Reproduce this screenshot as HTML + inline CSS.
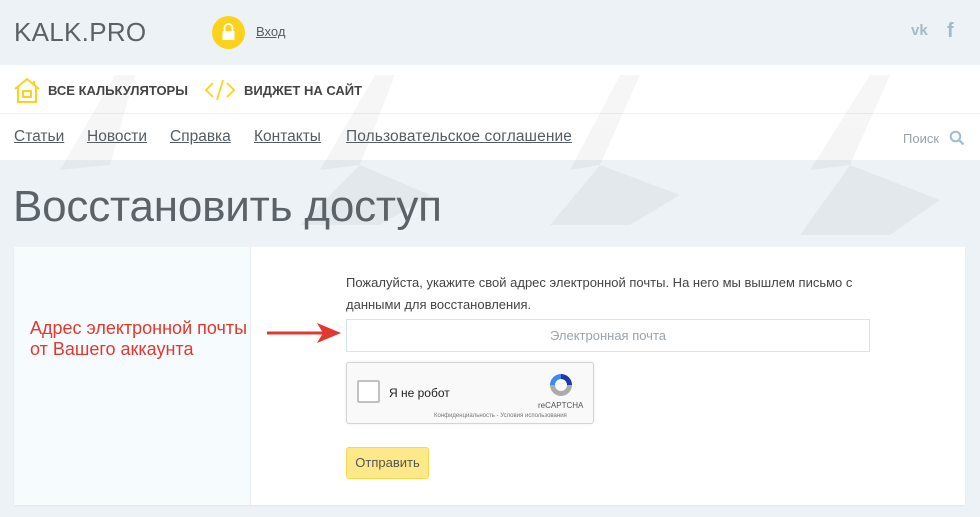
<!DOCTYPE html>
<html><head><meta charset="utf-8"><style>
*{margin:0;padding:0;box-sizing:border-box}
body{width:980px;height:517px;overflow:hidden;background:#edf2f6;font-family:"Liberation Sans",sans-serif;position:relative}
.abs{position:absolute}
a{color:#555d63;text-decoration:underline}
</style></head><body>
<div class="abs" style="left:0;top:65px;width:980px;height:95px;background:#fff"></div>
<div class="abs" style="left:0;top:113px;width:980px;height:1px;background:#eef1f3"></div>
<svg class="abs" style="left:0;top:0" width="980" height="517">
<g fill="#000" opacity="0.035">
<polygon points="115,75 135,75 110,165 60,170"/>
<polygon points="375,75 395,75 360,165 320,170"/>
<polygon points="620,75 640,75 600,165 570,170"/>
<polygon points="870,75 890,75 850,165 810,170"/>
<polygon points="360,165 430,195 380,225 300,225"/>
<polygon points="600,165 680,195 630,225 550,225"/>
<polygon points="850,165 940,200 890,235 800,235"/>
</g>
</svg>
<div class="abs" style="left:14px;top:17px;font-size:26px;color:#5a6268;letter-spacing:0.3px">KALK.PRO</div>
<div class="abs" style="left:212px;top:16px;width:33px;height:33px;border-radius:50%;background:#fcd21c"></div>
<svg class="abs" style="left:220px;top:22px" width="17" height="20"><path d="M4.5 9V6a4 4 0 0 1 8 0v3" stroke="#fff" stroke-width="1.8" fill="none"/><rect x="2.5" y="9" width="12" height="9" fill="#fff"/></svg>
<a class="abs" style="left:256px;top:24px;font-size:13px">Вход</a>
<div class="abs" style="left:911px;top:22px;font-size:15px;font-weight:bold;color:#9fbccb">vk</div>
<div class="abs" style="left:947px;top:20px;font-size:20px;font-weight:bold;color:#9fbccb">f</div>
<svg class="abs" style="left:13px;top:77px" width="28" height="27"><path d="M2 12 L14 2 L26 12 M5 10 V25 H23 V10 M10 14 H18 V20 H10Z M21 4 V8" stroke="#fcd21c" stroke-width="2" fill="none"/></svg>
<div class="abs" style="left:48px;top:83px;font-size:13px;font-weight:bold;color:#444">ВСЕ КАЛЬКУЛЯТОРЫ</div>
<svg class="abs" style="left:204px;top:78px" width="32" height="24"><path d="M9 5 L2 12 L9 19 M23 5 L30 12 L23 19 M19 2 L13 22" stroke="#fcd21c" stroke-width="1.8" fill="none"/></svg>
<div class="abs" style="left:244px;top:83px;font-size:13px;font-weight:bold;color:#444">ВИДЖЕТ НА САЙТ</div>
<div class="abs" style="top:128px;font-size:15.5px;color:#555d63;left:0;width:980px">
<a class="abs" style="left:14px">Статьи</a><a class="abs" style="left:87px">Новости</a><a class="abs" style="left:170px">Справка</a><a class="abs" style="left:254px">Контакты</a><a class="abs" style="left:346px;letter-spacing:0.1px">Пользовательское соглашение</a></div>
<div class="abs" style="left:903px;top:131px;font-size:13px;color:#9aa4aa">Поиск</div>
<svg class="abs" style="left:949px;top:130px" width="16" height="16"><circle cx="6.5" cy="6.5" r="4.8" stroke="#9fbccb" stroke-width="2" fill="none"/><path d="M10 10 L14.5 14.5" stroke="#9fbccb" stroke-width="2.2"/></svg>
<div class="abs" style="left:13px;top:182px;font-size:44px;color:#5b6369;letter-spacing:-0.2px">Восстановить доступ</div>
<div class="abs" style="left:14px;top:247px;width:951px;height:258px;background:#fff;box-shadow:0 1px 2px rgba(0,0,0,0.05)"></div>
<div class="abs" style="left:14px;top:247px;width:237px;height:258px;background:#f6fbfd;border-right:1px solid #e6eef2"></div>
<div class="abs" style="left:30px;top:318px;font-size:18px;line-height:21px;color:#e2382f">Адрес электронной почты<br>от Вашего аккаунта</div>
<svg class="abs" style="left:265px;top:321px" width="78" height="24"><path d="M2 12 H60" stroke="#e2382f" stroke-width="3"/><path d="M52 2 L76 12 L52 22 L58 12Z" fill="#e2382f"/></svg>
<div class="abs" style="left:346px;top:272px;font-size:13px;line-height:22px;color:#444;width:540px">Пожалуйста, укажите свой адрес электронной почты. На него мы вышлем письмо с данными для восстановления.</div>
<div class="abs" style="left:346px;top:319px;width:524px;height:33px;border:1px solid #d6e5ee;text-align:center;line-height:31px;font-size:13px;color:#9aa4aa">Электронная почта</div>
<div class="abs" style="left:346px;top:362px;width:248px;height:62px;border:1px solid #d3d3d3;border-radius:3px;background:#f9f9f9;box-shadow:0 0 3px rgba(0,0,0,0.08)"></div>
<div class="abs" style="left:357px;top:380px;width:23px;height:23px;border:2px solid #c1c1c1;border-radius:2px;background:#fff"></div>
<div class="abs" style="left:389px;top:386px;font-size:12px;color:#222">Я не робот</div>
<svg class="abs" style="left:547px;top:371px" width="28" height="28"><path d="M14 3 A11 11 0 0 1 25 14 L20 14 A6 6 0 0 0 14 8Z" fill="#1c3aa9"/><path d="M3 14 A11 11 0 0 1 14 3 L14 8 A6 6 0 0 0 8 14Z" fill="#4285f4"/><path d="M25 14 A11 11 0 0 1 3 14 L8 14 A6 6 0 0 0 20 14Z" fill="#ababab"/></svg>
<div class="abs" style="left:538px;top:401px;font-size:8px;color:#555">reCAPTCHA</div>
<div class="abs" style="left:434px;top:413px;font-size:6px;color:#777">Конфиденциальность - Условия использования</div>
<div class="abs" style="left:346px;top:447px;width:83px;height:32px;background:#fde98a;border:1px solid #f7d94a;border-radius:3px;font-size:13px;color:#555;text-align:center;line-height:30px">Отправить</div>
</body></html>
